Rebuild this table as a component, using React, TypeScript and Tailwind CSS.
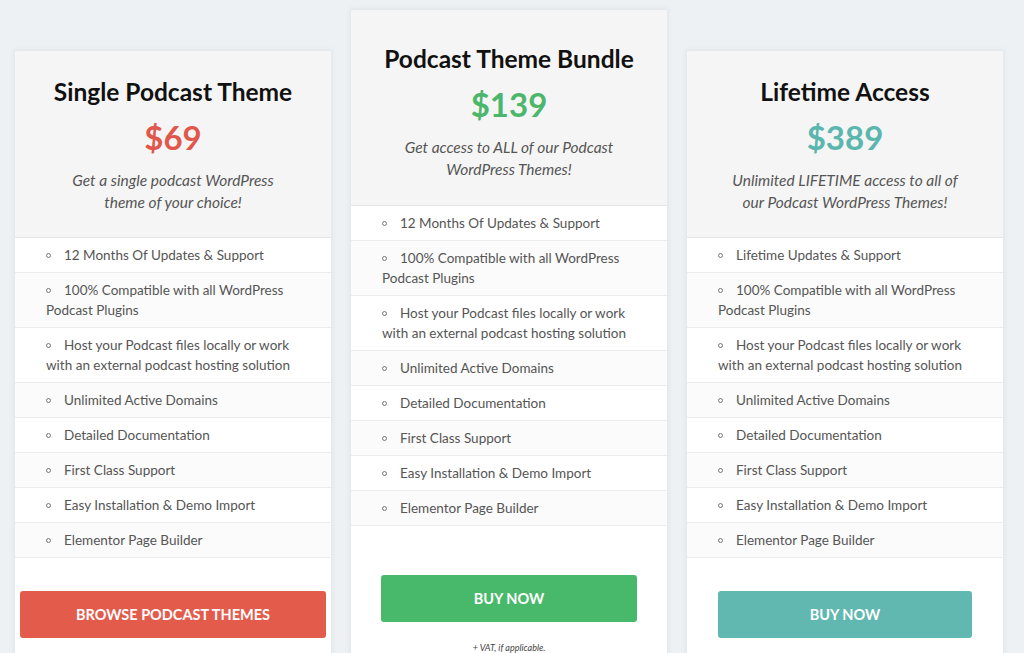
import React from "react";

type Plan = {
  title: string;
  price: string;
  priceClass: string;
  desc: string[];
  features: string[][];
  button: string;
  buttonClass: string;
  featured?: boolean;
};

const base = [
  ["100% Compatible with all WordPress", "Podcast Plugins"],
  ["Host your Podcast files locally or work", "with an external podcast hosting solution"],
  ["Unlimited Active Domains"],
  ["Detailed Documentation"],
  ["First Class Support"],
  ["Easy Installation & Demo Import"],
  ["Elementor Page Builder"],
];

const plans: Plan[] = [
  {
    title: "Single Podcast Theme",
    price: "$69",
    priceClass: "text-[#e2574c]",
    desc: ["Get a single podcast WordPress", "theme of your choice!"],
    features: [["12 Months Of Updates & Support"], ...base],
    button: "Browse Podcast Themes",
    buttonClass: "mx-[5px] bg-[#e35b4b]",
  },
  {
    title: "Podcast Theme Bundle",
    price: "$139",
    priceClass: "text-[#4cb66c]",
    desc: ["Get access to ALL of our Podcast", "WordPress Themes!"],
    features: [["12 Months Of Updates & Support"], ...base],
    button: "Buy Now",
    buttonClass: "mx-[30px] bg-[#48b96b]",
    featured: true,
  },
  {
    title: "Lifetime Access",
    price: "$389",
    priceClass: "text-[#5bb6ae]",
    desc: ["Unlimited LIFETIME access to all of", "our Podcast WordPress Themes!"],
    features: [["Lifetime Updates & Support"], ...base],
    button: "Buy Now",
    buttonClass: "mx-[31px] bg-[#60b8b0]",
  },
];

function Card({ plan }: { plan: Plan }) {
  return (
    <div
      className={`w-[318px] shrink-0 border border-[#e6e8eb] bg-white shadow-[0_0_6px_rgba(0,0,0,0.06)] ${
        plan.featured ? "mt-[9px]" : "mt-[50px]"
      }`}
    >
      <div
        className={`border-b border-[#e4e4e4] bg-[#f5f5f5] text-center ${
          plan.featured ? "pt-[35px] pb-[25px]" : "pt-[27px] pb-[24px]"
        }`}
      >
        <h2 className="text-[24.5px] font-bold leading-[28px] text-[#111]">{plan.title}</h2>
        <p className={`mt-[11px] text-[33px] font-bold leading-[40px] ${plan.priceClass}`}>
          {plan.price}
        </p>
        <p className="mt-[12px] text-[15.5px] italic leading-[22px] text-[#555]">
          {plan.desc[0]}
          <br />
          {plan.desc[1]}
        </p>
      </div>
      <ul>
        {plan.features.map((lines, i) => (
          <li
            key={i}
            className={`border-b border-[#ececec] py-[7px] pl-[31px] pr-2 text-[13.5px] leading-[20px] text-[#555] ${
              i % 2 ? "bg-[#fbfbfb]" : "bg-white"
            }`}
          >
            <span className="mr-[13px] inline-block h-[5px] w-[5px] -translate-y-[2px] rounded-full border border-[#777]" />
            {lines[0]}
            {lines[1] && (
              <>
                <br />
                {lines[1]}
              </>
            )}
          </li>
        ))}
      </ul>
      <div className={plan.featured ? "pt-[49px]" : "pt-[33px]"}>
        <a
          className={`flex h-[47px] items-center justify-center rounded-[3px] text-[14.5px] font-bold uppercase text-white ${plan.buttonClass}`}
        >
          {plan.button}
        </a>
      </div>
      {plan.featured ? (
        <p className="pt-[19px] pb-[20px] text-center text-[9px] italic text-[#444]">
          + VAT, if applicable.
        </p>
      ) : (
        <div className="h-[40px]" />
      )}
    </div>
  );
}

export default function App() {
  return (
    <div
      className="h-[653px] overflow-hidden bg-[#eef1f4]"
      style={{ fontFamily: "Lato, 'Open Sans', sans-serif" }}
    >
      <div className="flex items-start gap-[18px] pl-[14px]">
        {plans.map((p) => (
          <Card key={p.title} plan={p} />
        ))}
      </div>
    </div>
  );
}
